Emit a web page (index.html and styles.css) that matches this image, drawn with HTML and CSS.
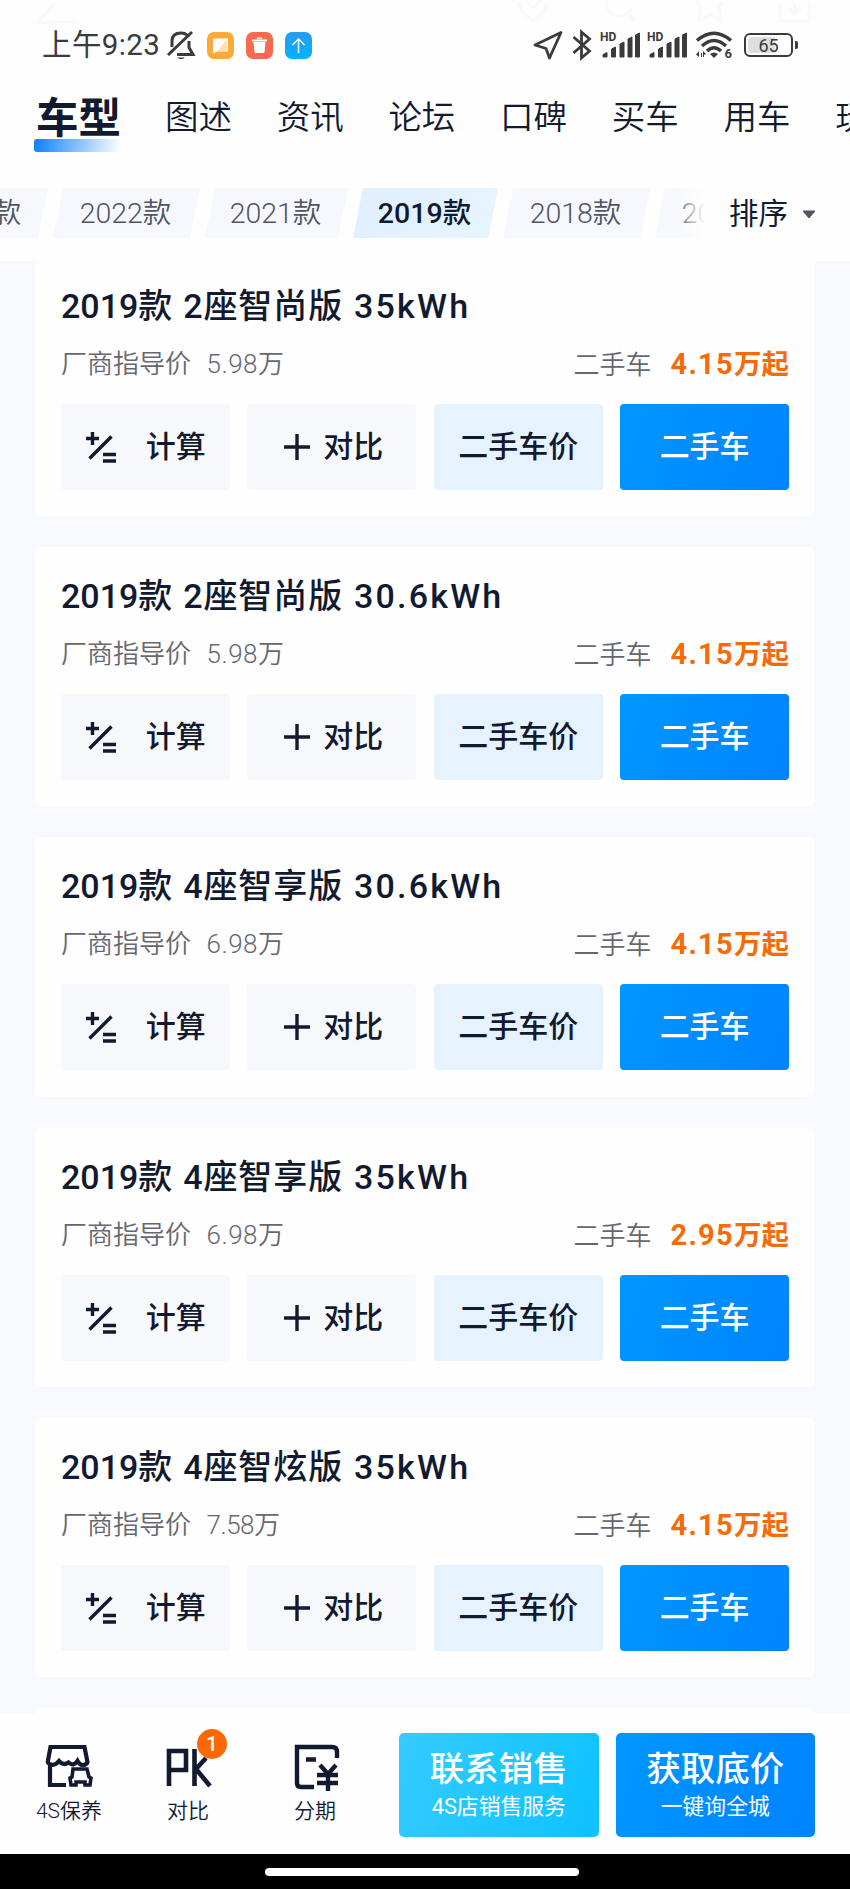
FILE: index.html
```html
<!DOCTYPE html>
<html lang="zh-CN">
<head>
<meta charset="utf-8">
<title>车型</title>
<link rel="stylesheet" href="styles.css">
</head>
<body>
<svg class="defs" width="0" height="0">
  <symbol id="calc" viewBox="0 0 32 32"><path d="M1 7.500h13M7.500 1v13M26.500 5.500L4.500 27.500M18 23.500h13M18 30h13" fill="none" stroke="currentColor" stroke-width="3.400"/></symbol>
  <symbol id="plus" viewBox="0 0 26 26"><path d="M0 13h26M13 0v26" stroke="currentColor" stroke-width="3.400"/></symbol>
  <symbol id="signal" viewBox="0 0 40 28"><path d="M2 26v-2.500l4-2v4.500zM10.500 26v-8l4-2v10zM19 26V13l4-2v15zM27 26V8l4-2v20zM34.500 26V4l4-2v24z" fill="currentColor" stroke="currentColor" stroke-linejoin="round"/></symbol>
</svg>
<div class="screen">
  <header class="header">
    <svg class="ghost" width="850" height="60" viewBox="0 0 850 60" fill="none" stroke="#f9f9fa" stroke-width="3"><path d="M54 4L38 22l16 2M38 22h38M519 2c0 10 8 13 14 19 8-6 13-10 13-19M528 3l5 5 8-8M606 1a14 14 0 0 0 26 8M628 13l7 8M697 1l4 6-2 14 11-6 11 6-2-14 4-6M780 2v19h29V2M795 4v10m-6-6l6 6 6-6"/></svg>
    <div class="status">
      <div class="status-left">
        <span class="clock">上午9:23</span>
        <svg class="bell" width="28" height="30" viewBox="0 0 28 30" fill="none" stroke="#3b3b3b" stroke-width="3"><path d="M5 17V11C5 5 9 3 14 3c3 0 5 1 6 2M10 24.500h16l-4-7V11M1 25L25 2"/><path d="M10 27.500q4 3 8 0z" fill="#3b3b3b" stroke="none"/></svg>
        <svg width="27" height="27" viewBox="0 0 27 27"><rect width="27" height="27" rx="7" fill="#fba938"/><path d="M6 6.500h15v13H10l-4 2z" fill="#fff"/><path d="M20 7v12H10z" fill="#ffe1b1"/></svg>
        <svg width="27" height="27" viewBox="0 0 27 27"><rect width="27" height="27" rx="7" fill="#f96b50"/><path d="M7.500 10h12l-1 10q0 1-1 1h-8q-1 0-1-1zM6 7.500h15v2H6zM11 5.500h5v1.500h-5z" fill="#fff"/></svg>
        <svg width="27" height="27" viewBox="0 0 27 27"><defs><linearGradient id="up" x2="0" y2="1"><stop stop-color="#299bed"/><stop offset="1" stop-color="#00b4ff"/></linearGradient></defs><rect width="27" height="27" rx="7" fill="url(#up)"/><path d="M13.500 21V7M7.500 13l6-6 6 6" fill="none" stroke="#fff" stroke-width="1.500"/></svg>
      </div>
      <div class="status-right">
        <svg width="30" height="30" viewBox="0 0 30 30" fill="none" stroke="currentColor" stroke-width="2.800" stroke-linejoin="round"><path d="M28 2.500L2 15l11 3.500L16.500 28z"/></svg>
        <svg class="bt" width="20" height="30" viewBox="0 0 20 30" fill="none" stroke="currentColor" stroke-width="2.800"><path d="M1.500 7l16 14-8 7V2l8 7-16 14"/></svg>
        <span class="cell"><b>HD</b><svg width="40" height="28"><use href="#signal"/></svg></span>
        <span class="cell"><b>HD</b><svg width="40" height="28"><use href="#signal"/></svg></span>
        <svg class="wifi" width="37" height="28" viewBox="0 0 37 28"><g fill="none" stroke="currentColor" stroke-width="3.500"><path d="M1 9.500Q18 -5 35 9.500M6 15Q18 4 30 15M11 20Q18 13.500 25 20"/></g><path d="M14 23q4-3 8 0l-4 4zM3 20v6l-3-2.500zm2 2h1v4H5zm2-2l3 3-2 1v2H7z" fill="currentColor"/><text x="28.500" y="27" class="six">6</text></svg>
        <span class="battery"><span class="level">65</span></span>
      </div>
    </div>
    <nav class="tabs">
      <span class="tab active">车型</span><span class="tab">图述</span><span class="tab">资讯</span><span class="tab">论坛</span><span class="tab">口碑</span><span class="tab">买车</span><span class="tab">用车</span><span class="tab">玩车</span>
    </nav>
    <div class="filter">
      <div class="years">
        <span class="chip first"><i>2023款</i></span><span class="chip"><i>2022款</i></span><span class="chip narrow"><i>2021款</i></span><span class="chip on"><i>2019款</i></span><span class="chip"><i>2018款</i></span><span class="chip last"><i>2017款</i></span>
      </div>
      <div class="sort">排序<svg width="14" height="9" viewBox="0 0 14 9"><path d="M1 1h12L7 8z" fill="#505463" stroke="#505463" stroke-linejoin="round"/></svg></div>
    </div>
  </header>

  <main class="list">
    <section class="card">
      <h2>2019款 <i>2座智尚版</i> <span>35kWh</span></h2>
      <div class="prices"><span class="guide">厂商指导价<span>5.98万</span></span><span class="used">二手车<b>4.15<em>万起</em></b></span></div>
      <div class="actions"><span class="btn calc"><svg width="32" height="32"><use href="#calc"/></svg>计算</span><span class="btn compare"><svg width="26" height="26"><use href="#plus"/></svg>对比</span><span class="btn value">二手车价</span><span class="btn primary">二手车</span></div>
    </section>
    <section class="card">
      <h2>2019款 <i>2座智尚版</i> <span>30.6kWh</span></h2>
      <div class="prices"><span class="guide">厂商指导价<span>5.98万</span></span><span class="used">二手车<b>4.15<em>万起</em></b></span></div>
      <div class="actions"><span class="btn calc"><svg width="32" height="32"><use href="#calc"/></svg>计算</span><span class="btn compare"><svg width="26" height="26"><use href="#plus"/></svg>对比</span><span class="btn value">二手车价</span><span class="btn primary">二手车</span></div>
    </section>
    <section class="card">
      <h2>2019款 <i>4座智享版</i> <span>30.6kWh</span></h2>
      <div class="prices"><span class="guide">厂商指导价<span>6.98万</span></span><span class="used">二手车<b>4.15<em>万起</em></b></span></div>
      <div class="actions"><span class="btn calc"><svg width="32" height="32"><use href="#calc"/></svg>计算</span><span class="btn compare"><svg width="26" height="26"><use href="#plus"/></svg>对比</span><span class="btn value">二手车价</span><span class="btn primary">二手车</span></div>
    </section>
    <section class="card">
      <h2>2019款 <i>4座智享版</i> <span>35kWh</span></h2>
      <div class="prices"><span class="guide">厂商指导价<span>6.98万</span></span><span class="used">二手车<b>2.95<em>万起</em></b></span></div>
      <div class="actions"><span class="btn calc"><svg width="32" height="32"><use href="#calc"/></svg>计算</span><span class="btn compare"><svg width="26" height="26"><use href="#plus"/></svg>对比</span><span class="btn value">二手车价</span><span class="btn primary">二手车</span></div>
    </section>
    <section class="card">
      <h2>2019款 <i>4座智炫版</i> <span>35kWh</span></h2>
      <div class="prices"><span class="guide">厂商指导价<span class="tight">7.58万</span></span><span class="used">二手车<b>4.15<em>万起</em></b></span></div>
      <div class="actions"><span class="btn calc"><svg width="32" height="32"><use href="#calc"/></svg>计算</span><span class="btn compare"><svg width="26" height="26"><use href="#plus"/></svg>对比</span><span class="btn value">二手车价</span><span class="btn primary">二手车</span></div>
    </section>
    <section class="card"></section>
  </main>

  <footer class="dock">
    <div class="tools">
      <div class="tool service">
        <svg width="48" height="46" viewBox="0 0 48 46" fill="none" stroke="#121a30" stroke-width="4.200"><path d="M5 19v21h16M5.500 2h34l3 15q-1 3-5 3-3 0-5-4-4 6-9 1.500Q18 21 14 16q-4 5-8 3.500-4-1-3-4z"/><path d="M28 24h14l2 8 2 1-1 7h-5v-3h-9v3h-5l-1-7 2-1z" stroke-width="3.600"/></svg>
        <span>4S保养</span>
      </div>
      <div class="tool pk">
        <svg width="48" height="46" viewBox="0 0 48 46" fill="none" stroke="#121a30" stroke-width="4.600"><path d="M5 41V6h17v19H5M30.500 4v37M42 13L32 24l14 17"/></svg>
        <span>对比</span><b class="badge">1</b>
      </div>
      <div class="tool loan">
        <svg width="48" height="46" viewBox="0 0 48 46" fill="none" stroke="#121a30" stroke-width="4.400"><path d="M23 42H10q-4 0-4-4V2h35q5 0 5 5v6M15 14.500h10M29 20l8 9 8-9M37 29v17M26 30h21M26 38h21"/></svg>
        <span>分期</span>
      </div>
    </div>
    <div class="cta cyan"><strong>联系销售</strong><span>4S店销售服务</span></div>
    <div class="cta blue"><strong>获取底价</strong><span>一键询全城</span></div>
  </footer>
  <div class="homebar"><i></i></div>
</div>
</body>
</html>
```
FILE: styles.css
```css
* { box-sizing: border-box; }
body { margin: 0; background: #fff; color: #121a30; font-family: Roboto, "Noto Sans CJK SC", sans-serif; }
i, em { font-style: normal; }
svg { display: block; flex: none; overflow: visible; }
.defs { position: absolute; }
.screen { width: 850px; height: 1889px; overflow: hidden; display: flex; flex-direction: column; background: #f7f9fe; }

.header { position: relative; flex: none; height: 261px; background: #fefefe; overflow: hidden; }
.ghost { position: absolute; left: 0; top: 0; }
.status { position: relative; height: 90px; display: flex; justify-content: space-between; padding: 0 57px 0 42px; color: #3b3b3b; }
.status-left, .status-right { display: flex; align-items: center; height: 90px; }
.status-left { gap: 12px; }
.clock { font-size: 29.500px; line-height: 40px; letter-spacing: .4px; width: 116px; white-space: nowrap; }
.bell { margin-left: -3px; }
.bt { margin-left: 9px; }
.cell { position: relative; margin-left: 9px; }
.cell b { position: absolute; left: -1px; top: 0; font-size: 12px; line-height: 12px; font-weight: 700; }
.cell + .cell { margin-left: 7px; }
.wifi { margin-left: 8px; }
.six { font: 700 13px Roboto, sans-serif; fill: currentColor; }
.battery { position: relative; margin-left: 11px; width: 49px; height: 24px; border: 2px solid #3b3b3b; border-radius: 6px; padding: 2px; }
.battery::after { content: ""; position: absolute; right: -7px; top: 6px; width: 3px; height: 8px; border-radius: 0 2px 2px 0; background: #3b3b3b; }
.level { display: block; height: 16px; border-radius: 3px; background: linear-gradient(90deg, #dedede 65%, #fff 65%); text-align: center; font-size: 18px; line-height: 17px; }

.tabs { display: flex; height: 98px; padding: 1px 0 0 36px; white-space: nowrap; }
.tab { flex: none; width: 111.700px; font-size: 33.500px; line-height: 54px; font-weight: 350; }
.tab.active { position: relative; width: 129px; font-size: 42.500px; font-weight: 700; line-height: 55px; }
.tab.active::before { content: ""; position: absolute; left: -2px; top: 48px; width: 86px; height: 13px; border-radius: 3px; background: linear-gradient(100deg, #0b80ff, #fff); }

.filter { display: flex; height: 50px; align-items: center; }
.years { display: flex; gap: 5px; width: 705px; height: 50px; overflow: hidden; position: relative; flex: none; }
.years::after { content: ""; position: absolute; right: 0; top: 0; width: 30px; height: 50px; background: linear-gradient(90deg, #fefefe00, #fefefe); }
.chip { flex: none; width: 147px; height: 50px; padding: 2px 2px 0 0; line-height: 48px; text-align: center; font-size: 28.500px; font-weight: 350; color: #505463; background: #f7f8fd; clip-path: polygon(10px 0, 100% 0, calc(100% - 10px) 100%, 0 100%); }
.chip.first { margin-left: -99px; padding: 2px 0 0 2px; }
.chip.narrow { width: 143px; }
.chip.on { width: 145px; color: #121a30; font-weight: 500; background: linear-gradient(135deg, #e0efff, #e6f5ff); }
.sort { padding: 2px 0 0 24px; display: flex; align-items: center; gap: 14px; font-size: 29.500px; line-height: 48px; font-weight: 400; }

.list { flex: none; height: 1453px; overflow: hidden; padding: 0 35px; }
.card { height: 259.300px; margin-bottom: 31px; border-radius: 6px; background: #fefefe; padding: 24px 26px 0; }
.card:first-child { height: 255px; padding-top: 19.700px; border-radius: 0 0 6px 6px; }
h2 { margin: 0; height: 50px; font-size: 34px; line-height: 50px; font-weight: 500; white-space: nowrap; word-spacing: 2.500px; }
h2 i { letter-spacing: .9px; }
h2 span { letter-spacing: 2.200px; }
.prices { display: flex; justify-content: space-between; margin-top: 15px; height: 36px; line-height: 36px; font-size: 26px; font-weight: 350; color: #66676f; }
.guide span { margin-left: 15.500px; letter-spacing: .5px; }
.guide .tight { letter-spacing: -.5px; }
.used { position: relative; }
.prices b { margin-left: 19px; color: #f46b08; font-size: 29px; font-weight: 700; letter-spacing: 1.300px; }
.prices b em { font-size: 27.500px; letter-spacing: 0; }
.actions { display: grid; grid-template-columns: repeat(4, 1fr); gap: 17.700px; margin-top: 22px; }
.btn { display: flex; align-items: center; justify-content: center; height: 86px; border-radius: 4px; background: #f7f8fc; font-size: 30px; line-height: 86px; font-weight: 500; }
.calc { gap: 29px; }
.compare { gap: 13px; padding-left: 4px; }
.value { background: #e6f3ff; }
.primary { color: #fff; background: linear-gradient(110deg, #0097ff, #0083ff); }

.dock { flex: none; height: 140px; background: #fefefe; display: flex; padding: 19px 35px 0 0; }
.tools { width: 399px; position: relative; display: flex; }
.tool { position: relative; width: 128px; padding-top: 12px; display: flex; flex-direction: column; align-items: center; font-size: 21px; line-height: 28px; font-weight: 350; white-space: nowrap; }
.tool span { margin-top: 6px; }
.service { margin-left: 5px; }
.pk { width: 110px; }
.loan { width: 144px; }
.badge { position: absolute; left: 64px; top: -4px; width: 30px; height: 30px; border-radius: 50%; background: #fd6900; color: #fff; text-align: center; font-size: 20px; line-height: 30px; font-weight: 500; }
.cta { width: 199.500px; height: 104px; border-radius: 5px; color: #fff; text-align: center; padding-top: 12px; }
.cta strong { display: block; font-size: 34.500px; line-height: 48px; font-weight: 500; }
.cta span { display: block; font-size: 21.800px; line-height: 28px; font-weight: 400; }
.cyan { background: linear-gradient(110deg, #35cbff, #0dc2ff); margin-right: 17px; }
.blue { background: linear-gradient(110deg, #0097ff, #0083ff); }
.homebar { flex: none; height: 35px; background: #000; display: flex; justify-content: center; padding: 14px 6px 0 0; }
.homebar i { width: 314px; height: 8px; border-radius: 4px; background: #fff; }
```
